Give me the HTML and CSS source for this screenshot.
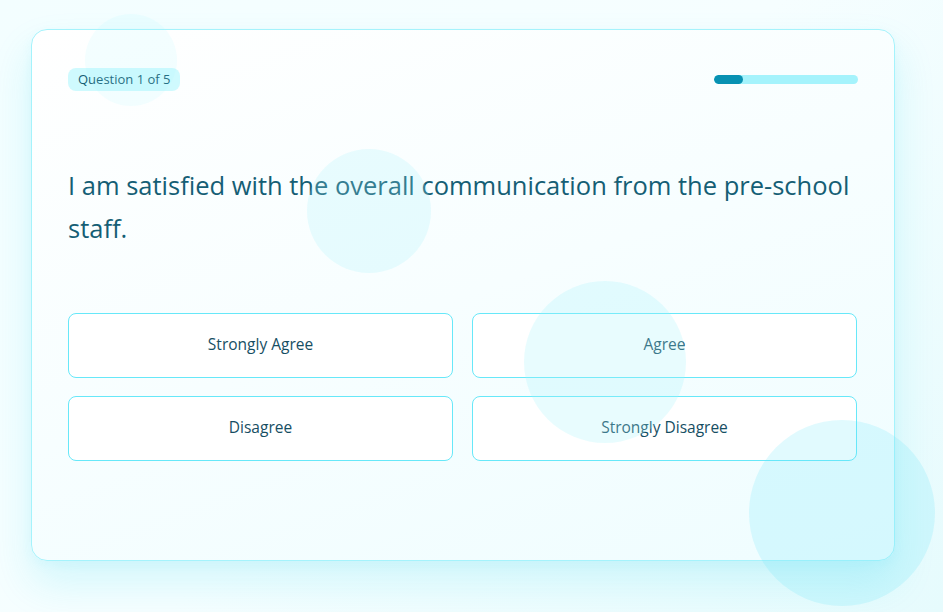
FILE: index.html
```html
<!DOCTYPE html>
<html lang="en">
<head>
<meta charset="utf-8">
<title>Survey</title>
<link rel="stylesheet" href="styles.css">
</head>
<body>
<div class="page">
  <div class="card">
    <div class="top">
      <span class="badge">Question 1 of 5</span>
      <div class="progress"><div class="fill" style="width:20%"></div></div>
    </div>
    <h1 class="question">I am satisfied with the overall communication from the pre-school staff.</h1>
    <div class="options">
      <button class="opt">Strongly Agree</button>
      <button class="opt">Agree</button>
      <button class="opt">Disagree</button>
      <button class="opt">Strongly Disagree</button>
    </div>
  </div>
  <span class="bubble b1"></span>
  <span class="bubble b2"></span>
  <span class="bubble b3"></span>
  <span class="bubble b4"></span>
</div>
</body>
</html>
```
FILE: styles.css
```css
html, body {
  margin: 0;
  padding: 0;
}
body {
  width: 943px;
  height: 612px;
  overflow: hidden;
  background: linear-gradient(135deg, #f3feff 0%, #f6feff 50%, #e6fbfd 100%);
  font-family: "Open Sans", "Noto Sans", sans-serif;
}
.page {
  position: relative;
  width: 943px;
  height: 612px;
  padding: 29px 0 0 31px;
  box-sizing: border-box;
}
.card {
  width: 864px;
  height: 532px;
  box-sizing: border-box;
  border: 1px solid #a5f3fc;
  border-radius: 16px;
  background: linear-gradient(160deg, #ffffff 0%, #f7feff 50%, #effdff 100%);
  box-shadow: 0 22px 40px rgba(34, 211, 238, 0.16), 0 4px 12px rgba(34, 211, 238, 0.06);
  padding: 37px 36px 36px 36px;
}
.top {
  display: flex;
  justify-content: space-between;
  align-items: center;
  height: 24px;
}
.badge {
  display: inline-block;
  background: #cffafe;
  color: #155e75;
  font-size: 13px;
  line-height: 23px;
  height: 23px;
  padding: 0 10px;
  border-radius: 8px;
}
.progress {
  width: 144px;
  height: 9px;
  border-radius: 5px;
  background: #a5f3fc;
  overflow: hidden;
}
.fill {
  height: 100%;
  background: #0891b2;
  border-radius: 5px;
}
.question {
  margin: 73px 0 0 0;
  font-size: 25.5px;
  font-weight: 400;
  line-height: 43px;
  color: #155e75;
}
.options {
  margin-top: 63px;
  display: grid;
  grid-template-columns: 385px 385px;
  column-gap: 19px;
  row-gap: 18px;
}
.opt {
  height: 65px;
  padding: 0 0 3px 0;
  background: #ffffff;
  border: 1px solid #67e8f9;
  border-radius: 8px;
  color: #164e63;
  font-family: "Open Sans", "Noto Sans", sans-serif;
  font-size: 15.5px;
  font-weight: 500;
  cursor: pointer;
}
.bubble {
  position: absolute;
  border-radius: 50%;
  pointer-events: none;
}
.b1 {
  left: 85px; top: 14px; width: 92px; height: 92px;
  background: rgba(165, 243, 252, 0.12);
}
.b2 {
  left: 307px; top: 149px; width: 124px; height: 124px;
  background: rgba(165, 243, 252, 0.22);
}
.b3 {
  left: 524px; top: 281px; width: 162px; height: 162px;
  background: rgba(165, 243, 252, 0.26);
}
.b4 {
  left: 749px; top: 420px; width: 186px; height: 186px;
  background: rgba(103, 232, 249, 0.2);
}
```
